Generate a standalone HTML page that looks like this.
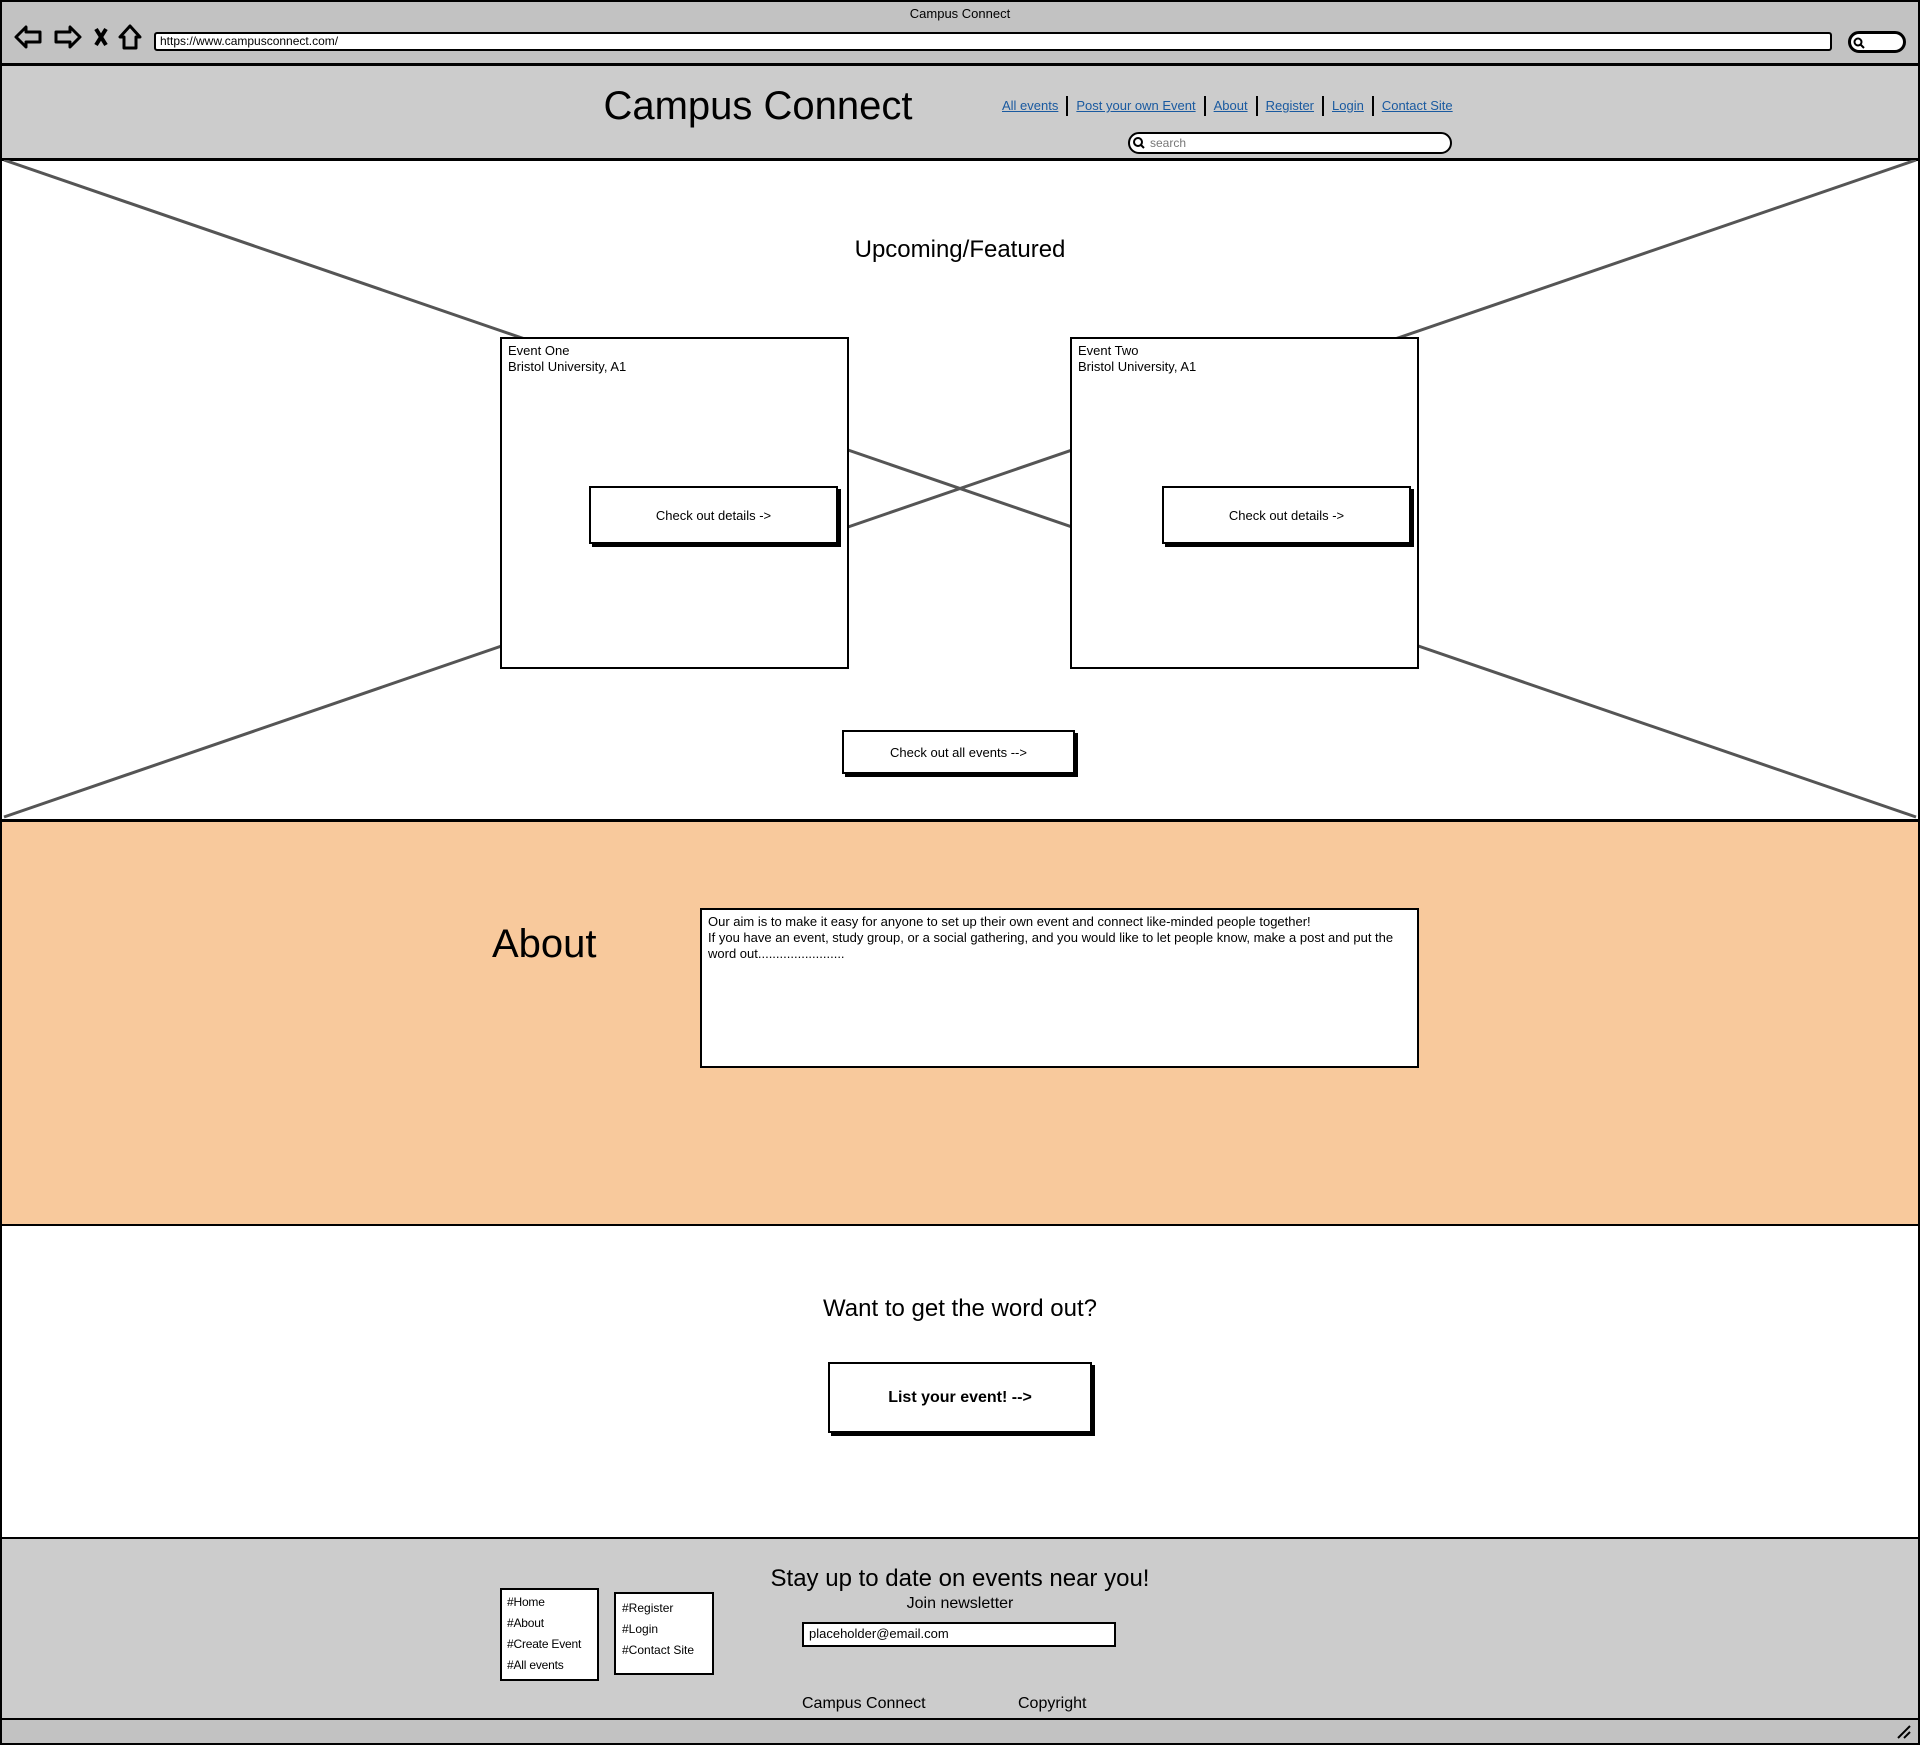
<!DOCTYPE html>
<html><head><meta charset="utf-8"><style>
*{box-sizing:border-box;margin:0;padding:0}
body{width:1920px;height:1745px;background:#fff;font-family:"Liberation Sans",sans-serif;color:#000;position:relative;overflow:hidden}
.a{position:absolute}
.bx{position:absolute;border:2px solid #000;background:#fff}
.btn{position:absolute;border:2px solid #000;background:#fff;box-shadow:3px 3px 0 #000;display:flex;align-items:center;justify-content:center;font-size:13px}
.nav a{color:#1a5aa0;text-decoration:underline;font-size:13px}
.nav span{display:inline-block;width:2px;height:20px;background:#000;vertical-align:middle;margin:0 8px}
</style></head><body>
<div class="a" style="left:0;top:0;width:1920px;height:66px;background:#c2c2c2;border:2px solid #000;border-bottom:3px solid #000"></div>
<div class="a" style="left:0;top:6px;width:1920px;text-align:center;font-size:13px">Campus Connect</div>
<svg class="a" style="left:12px;top:22px" width="135" height="30" viewBox="0 0 135 30" fill="none" stroke="#000" stroke-width="3" stroke-linejoin="round">
<path d="M4 15 L14 5 V10 H28 V20 H14 V25 Z"/>
<path d="M68 15 L58 5 V10 H44 V20 H58 V25 Z"/>
<path d="M84 7 L94 23 M94 7 L84 23" stroke-width="4"/>
<path d="M118 4 L108 15 H112 V26 H124 V15 H128 Z"/>
</svg>
<div class="a" style="left:154px;top:32px;width:1678px;height:19px;background:#fff;border:2px solid #000;border-radius:3px;font-size:12px;padding-left:4px;line-height:15px">https://www.campusconnect.com/</div>
<div class="a" style="left:1848px;top:31px;width:58px;height:22px;background:#fff;border:3px solid #000;border-radius:11px"></div>
<svg class="a" style="left:1852px;top:36px" width="14" height="14"><circle cx="6" cy="6" r="3.5" fill="none" stroke="#000" stroke-width="2"/><path d="M8.5 8.5 L12 12" stroke="#000" stroke-width="2"/></svg>
<div class="a" style="left:0;top:66px;width:1920px;height:95px;background:#ccc;border:2px solid #000;border-top:none;border-bottom:3px solid #000"></div>
<div class="a" style="left:560px;top:84px;width:396px;text-align:center;font-size:40px">Campus Connect</div>
<div class="a nav" style="left:1002px;top:96px;white-space:nowrap"><a>All events</a><span></span><a>Post your own Event</a><span></span><a>About</a><span></span><a>Register</a><span></span><a>Login</a><span></span><a>Contact Site</a></div>
<div class="a" style="left:1128px;top:132px;width:324px;height:22px;background:#fff;border:2px solid #000;border-radius:11px;font-size:12px;color:#777;padding-left:20px;line-height:18px">search</div>
<svg class="a" style="left:1132px;top:136px" width="14" height="14"><circle cx="6" cy="6" r="4" fill="none" stroke="#000" stroke-width="2"/><path d="M9 9 L12 12" stroke="#000" stroke-width="2"/></svg>
<div class="a" style="left:0;top:160px;width:1920px;height:662px;border:2px solid #000;border-top:none;border-bottom:3px solid #000"></div>
<svg class="a" style="left:0;top:160px" width="1920" height="660"><path d="M4 0 L1916 657 M1916 0 L4 657" stroke="#555" stroke-width="3"/></svg>
<div class="a" style="left:0;top:236px;width:1920px;text-align:center;font-size:24px">Upcoming/Featured</div>
<div class="bx" style="left:500px;top:337px;width:349px;height:332px"><div style="font-size:13px;line-height:16px;padding:4px 6px">Event One<br>Bristol University, A1</div></div>
<div class="bx" style="left:1070px;top:337px;width:349px;height:332px"><div style="font-size:13px;line-height:16px;padding:4px 6px">Event Two<br>Bristol University, A1</div></div>
<div class="btn" style="left:589px;top:486px;width:249px;height:58px">Check out details -&gt;</div>
<div class="btn" style="left:1162px;top:486px;width:249px;height:58px">Check out details -&gt;</div>
<div class="btn" style="left:842px;top:730px;width:233px;height:44px">Check out all events --&gt;</div>
<div class="a" style="left:0;top:822px;width:1920px;height:404px;background:#f8c99c;border:2px solid #000;border-top:none;border-bottom:2px solid #000"></div>
<div class="a" style="left:492px;top:922px;font-size:40px">About</div>
<div class="bx" style="left:700px;top:908px;width:719px;height:160px;font-size:13px;line-height:16px;padding:4px 6px">Our aim is to make it easy for anyone to set up their own event and connect like-minded people together!<br>If you have an event, study group, or a social gathering, and you would like to let people know, make a post and put the word out........................</div>
<div class="a" style="left:0;top:1226px;width:1920px;height:313px;border:2px solid #000;border-top:none"></div>
<div class="a" style="left:0;top:1295px;width:1920px;text-align:center;font-size:24px">Want to get the word out?</div>
<div class="btn" style="left:828px;top:1362px;width:264px;height:71px;font-size:16px;font-weight:bold">List your event! --&gt;</div>
<div class="a" style="left:0;top:1537px;width:1920px;height:184px;background:#ccc;border:2px solid #000;border-bottom:3px solid #000"></div>
<div class="a" style="left:0;top:1720px;width:1920px;height:25px;background:#c2c2c2;border:2px solid #000;border-top:none"></div>
<svg class="a" style="left:1896px;top:1724px" width="16" height="16"><path d="M2 14 L14 2 M8 14 L14 8" stroke="#000" stroke-width="2"/></svg>
<div class="bx" style="left:500px;top:1588px;width:99px;height:93px;font-size:12px;line-height:21px;padding:2px 5px;white-space:nowrap;letter-spacing:-0.2px">#Home<br>#About<br>#Create Event<br>#All events</div>
<div class="bx" style="left:614px;top:1592px;width:100px;height:83px;font-size:12px;line-height:21px;padding:4px 6px;white-space:nowrap">#Register<br>#Login<br>#Contact Site</div>
<div class="a" style="left:0;top:1565px;width:1920px;text-align:center;font-size:24px">Stay up to date on events near you!</div>
<div class="a" style="left:0;top:1595px;width:1920px;text-align:center;font-size:16px">Join newsletter</div>
<div class="a" style="left:802px;top:1622px;width:314px;height:25px;background:#fff;border:2px solid #000;font-size:13px;padding-left:5px;line-height:20px">placeholder@email.com</div>
<div class="a" style="left:802px;top:1695px;font-size:16px">Campus Connect</div>
<div class="a" style="left:1018px;top:1695px;font-size:16px">Copyright</div>
</body></html>
